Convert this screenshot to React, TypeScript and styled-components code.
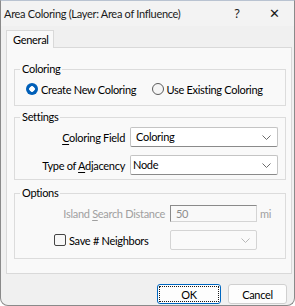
import React from "react";
import styled, { createGlobalStyle, css } from "styled-components";

const GlobalStyle = createGlobalStyle`
  html, body {
    margin: 0;
    padding: 0;
    background: #ffffff;
  }
  * {
    box-sizing: border-box;
  }
`;

const Chevron = () => (
  <svg width="9" height="5" viewBox="0 0 9 5">
    <polyline points="0.5,0.5 4.5,4.5 8.5,0.5" fill="none" stroke="#6b6b6b" strokeWidth="1" />
  </svg>
);

const App = () => {
  return (
    <>
      <GlobalStyle />
      <Window>
        <TitleBar>
          <Title>Area Coloring (Layer: Area of Influence)</Title>
          <TitleButton>?</TitleButton>
          <TitleButton $close>✕</TitleButton>
        </TitleBar>
        <Body>
          <TabStrip>
            <Tab>General</Tab>
          </TabStrip>
          <TabPanel>
            <Group $top={5} $bottom={8}>
              <Legend>Coloring</Legend>
              <RadioRow>
                <RadioOption>
                  <Radio $checked />
                  Create New Coloring
                </RadioOption>
                <RadioOption>
                  <Radio />
                  Use Existing Coloring
                </RadioOption>
              </RadioRow>
            </Group>

            <Group $top={3} $bottom={4} $gap={4}>
              <Legend>Settings</Legend>
              <FieldGrid>
                <FieldLabel>
                  <Key>C</Key>oloring Field
                </FieldLabel>
                <Combo>
                  <ComboText>Coloring</ComboText>
                  <Chevron />
                </Combo>
                <FieldLabel>
                  Type of <Key>A</Key>djacency
                </FieldLabel>
                <Combo>
                  <ComboText $tight>Node</ComboText>
                  <Chevron />
                </Combo>
              </FieldGrid>
            </Group>

            <Group $top={5} $bottom={8} $gap={6}>
              <Legend>Options</Legend>
              <OptionsGrid>
                <FieldLabel $disabled>
                  Island <Key>S</Key>earch Distance
                </FieldLabel>
                <TextBox>50</TextBox>
                <Unit>mi</Unit>
                <CheckLabel>
                  <CheckBox />
                  Save # Neighbors
                </CheckLabel>
                <Combo $disabled>
                  <ComboText />
                  <Chevron />
                </Combo>
                <span />
              </OptionsGrid>
            </Group>
          </TabPanel>
          <ButtonRow>
            <DialogButton $primary $width={64}>
              <FocusRect>OK</FocusRect>
            </DialogButton>
            <DialogButton $width={59}>Cancel</DialogButton>
          </ButtonRow>
        </Body>
      </Window>
    </>
  );
};

export default App;

const Window = styled.div`
  width: 295px;
  height: 306px;
  display: flex;
  flex-direction: column;
  border: 1px solid #8a8a8a;
  border-top-color: #b9c3d1;
  border-radius: 0 0 8px 8px;
  background: #f0f0f0;
  overflow: hidden;
  font-family: Lato, "Noto Sans", sans-serif;
  font-size: 11px;
  letter-spacing: -0.3px;
  color: #000;
`;

const TitleBar = styled.div`
  height: 25px;
  flex: none;
  display: flex;
  align-items: center;
  padding-left: 3px;
  padding-bottom: 1px;
  background: #f3f3f3;
`;

const Title = styled.div`
  flex: 1;
  white-space: nowrap;
  color: #1a1a1a;
`;

const TitleButton = styled.div<{ $close?: boolean }>`
  width: ${({ $close }) => ($close ? "40px" : "34px")};
  text-align: center;
  font-family: "Noto Sans", sans-serif;
  font-size: ${({ $close }) => ($close ? "13px" : "12px")};
  color: #1a1a1a;
`;

const Body = styled.div`
  flex: 1;
  display: flex;
  flex-direction: column;
  padding: 4px 2px 0 5px;
`;

const TabStrip = styled.div`
  display: flex;
  height: 18px;
  position: relative;
  z-index: 1;
`;

const Tab = styled.div`
  width: 48px;
  height: 18px;
  padding: 1px 0 0 6px;
  background: #f9f9f9;
  border: 1px solid #d9d9d9;
  border-bottom: none;
  line-height: 15px;
`;

const TabPanel = styled.div`
  width: 286px;
  margin-top: -1px;
  padding: 14px 5px 14px 7px;
  background: #f9f9f9;
  border: 1px solid #d9d9d9;
`;

const Group = styled.fieldset<{ $top: number; $bottom: number; $gap?: number }>`
  margin: ${({ $gap }) => $gap ?? 0}px 0 0 0;
  padding: ${({ $top, $bottom }) => `${$top}px 8px ${$bottom}px 8px`};
  border: 1px solid #dcdcdc;
  min-width: 0;
`;

const Legend = styled.legend`
  padding: 0 2px;
  margin-left: -3px;
  line-height: 14px;
  height: 14px;
`;

const RadioRow = styled.div`
  display: flex;
  height: 16px;
  align-items: center;
  padding-left: 3px;
`;

const RadioOption = styled.label`
  display: flex;
  align-items: center;
  gap: 3px;
  width: 129px;
  white-space: nowrap;
`;

const Radio = styled.span<{ $checked?: boolean }>`
  width: 12px;
  height: 12px;
  border-radius: 50%;
  flex: none;
  ${({ $checked }) =>
    $checked
      ? css`
          background: radial-gradient(circle, #ffffff 0 2.5px, #005fb8 3px);
        `
      : css`
          border: 1px solid #5c5c5c;
          background: #f5f5f5;
        `}
`;

const FieldGrid = styled.div`
  display: grid;
  grid-template-columns: 100px 148px;
  column-gap: 5px;
  row-gap: 8px;
  align-items: center;
  padding-left: 2px;
`;

const OptionsGrid = styled.div`
  display: grid;
  grid-template-columns: 140px 87px auto;
  column-gap: 5px;
  row-gap: 8px;
  align-items: center;
  padding-left: 2px;
`;

const FieldLabel = styled.div<{ $disabled?: boolean }>`
  text-align: right;
  white-space: nowrap;
  color: ${({ $disabled }) => ($disabled ? "#a0a0a0" : "#000")};
`;

const Key = styled.span`
  text-decoration: underline;
  text-underline-offset: 2px;
`;

const Combo = styled.div<{ $disabled?: boolean }>`
  height: 20px;
  display: flex;
  align-items: center;
  justify-content: space-between;
  padding: 0 6px 0 0;
  border: 1px solid ${({ $disabled }) => ($disabled ? "#d4d4d4" : "#c4c4c4")};
  border-bottom-color: ${({ $disabled }) => ($disabled ? "#d4d4d4" : "#8a8a8a")};
  border-radius: 2px;
  background: ${({ $disabled }) => ($disabled ? "#fafafa" : "#ffffff")};
  ${({ $disabled }) =>
    $disabled &&
    css`
      svg polyline {
        stroke: #b8b8b8;
      }
    `}
`;

const ComboText = styled.span<{ $tight?: boolean }>`
  padding-left: ${({ $tight }) => ($tight ? "2px" : "5px")};
  flex: 1;
  height: 16px;
  line-height: 16px;
`;

const TextBox = styled.div`
  height: 17px;
  line-height: 15px;
  padding-left: 5px;
  border: 1px solid #d4d4d4;
  border-left-color: #8a8a8a;
  border-top-color: #8a8a8a;
  background: #f9f9f9;
  color: #8d8d8d;
`;

const Unit = styled.span`
  color: #a0a0a0;
  margin-left: -2px;
`;

const CheckLabel = styled.label`
  display: flex;
  align-items: center;
  gap: 3px;
  padding-left: 29px;
  white-space: nowrap;
`;

const CheckBox = styled.span`
  width: 12px;
  height: 12px;
  border: 1px solid #444;
  border-radius: 2px;
  background: #f7f7f7;
  flex: none;
`;

const ButtonRow = styled.div`
  display: flex;
  justify-content: flex-end;
  gap: 7px;
  padding: 10px 5px 0 0;
`;

const DialogButton = styled.div<{ $primary?: boolean; $width: number }>`
  width: ${({ $width }) => $width}px;
  height: 20px;
  display: flex;
  align-items: center;
  justify-content: center;
  border-radius: 3px;
  background: #fdfdfd;
  border: 1px solid #d0d0d0;
  ${({ $primary }) =>
    $primary &&
    css`
      border: 1px solid #0067c0;
      padding: 1px;
    `}
`;

const FocusRect = styled.span`
  flex: 1;
  align-self: stretch;
  display: flex;
  align-items: center;
  justify-content: center;
  border: 1px dotted #1a1a1a;
`;
